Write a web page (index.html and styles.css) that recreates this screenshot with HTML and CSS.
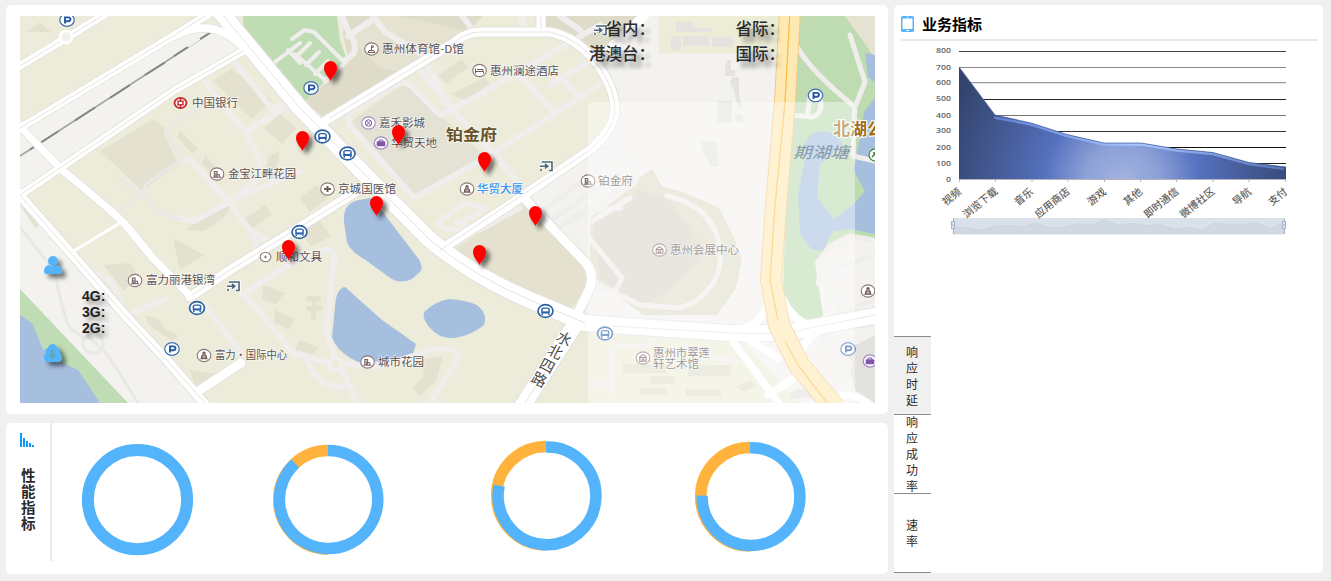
FILE: index.html
```html
<!DOCTYPE html>
<html lang="zh">
<head>
<meta charset="utf-8">
<title>业务指标</title>
<link rel="stylesheet" href="styles.css">
</head>
<body>
<main class="dashboard">
  <div class="left-column">
    <section class="card map-card">
      <div class="map">
        <svg class="map-canvas" viewBox="20 16 855 387" width="855" height="387">
          <defs>
            <symbol id="parking" viewBox="-8 -8 16 16" overflow="visible"><ellipse rx="7.2" ry="6.4" fill="#fff" stroke="#3f6fae" stroke-width="1.2"/><path d="M-2 3.6V-2.6H1.3a1.9 1.7 0 0 1 0 3.9H-2" fill="none" stroke="#2457a5" stroke-width="1.9"/></symbol>
            <symbol id="bus" viewBox="-9 -9 18 18" overflow="visible"><ellipse rx="8.3" ry="7.2" fill="#2c61a7"/><ellipse rx="6.6" ry="5.6" fill="#fff"/><path d="M-4.3 2.6V-1.8Q-4.3-3.5-2-3.5H2Q4.3-3.5 4.3-1.8V2.6Z" fill="#2c61a7"/><path d="M-2.8-2.2H2.8V.4H-2.8Z" fill="#fff"/><path d="M-3.2 2.5v1.6M3.2 2.5v1.6" stroke="#2c61a7" stroke-width="1.5"/></symbol>
            <symbol id="estate" viewBox="-8 -8 16 16" overflow="visible"><ellipse rx="6.8" ry="6.1" fill="#fff" stroke="#8b7877" stroke-width="1.1"/><path d="M-4 3.3H4M-2.7 3V-2.4H.1V3M2.4 3V.7H.1M-1.2-.8V3" fill="none" stroke="#7b6664" stroke-width="1.1"/></symbol>
            <symbol id="tower" viewBox="-8 -8 16 16" overflow="visible"><ellipse rx="6.8" ry="6.1" fill="#fff" stroke="#8b7877" stroke-width="1.1"/><path d="M-4.3 3.7H4.3L3 2.5V.3L1.6-.4V-3L0-4.2-1.6-3V-.4L-3 .3V2.5Z" fill="#755b58"/><path d="M-2 1.3H2M0-2V3" stroke="#fff" stroke-width=".5"/></symbol>
            <symbol id="museum" viewBox="-8 -8 16 16" overflow="visible"><ellipse rx="6.8" ry="6.1" fill="#fff" stroke="#8b7877" stroke-width="1.1"/><path d="M-3.3-1 0-3.4 3.3-1V3.2H-3.3ZM-3-.5H3M-1 3V1H1V3" fill="none" stroke="#755b58" stroke-width="1.1"/></symbol>
            <symbol id="bag" viewBox="-8 -8 16 16" overflow="visible"><ellipse rx="6.8" ry="6.1" fill="#fff" stroke="#a68cc5" stroke-width="1.3"/><rect x="-4.3" y="-1.7" width="8.6" height="5" rx="1" fill="#8056ad"/><path d="M-1.8-1.5V-3H1.8V-1.5" fill="none" stroke="#8056ad"/></symbol>
            <symbol id="exit" viewBox="-7 -6 14 12" overflow="visible"><path d="M-4-4H6V4.5H3M-6 .2H1M-1-2 1.8.2-1 2.5M-5 3v2" fill="none" stroke="#fff" stroke-width="3.5"/><path d="M-4-4H6V4.5H3M-6 .2H1M-1-2 1.8.2-1 2.5M-5 3v2" fill="none" stroke="#4a6478" stroke-width="1.6"/></symbol>
            <filter id="pin-shadow" x="-80%" y="-50%" width="300%" height="220%"><feDropShadow dx="4" dy="4" stdDeviation="2" flood-color="#222" flood-opacity=".6"/></filter>
            <symbol id="pin" viewBox="0 0 13 20" overflow="visible"><path d="M6.500 20C5 16 0 13 0 6.500a6.500 6.500 0 0 1 13 0C13 13 8 16 6.500 20Z" fill="red" filter="url(#pin-shadow)"/></symbol>
          </defs>

          <rect x="20" y="16" width="855" height="387" fill="#edecda"/>
          <!-- open ground -->
          <path d="M20 130 190 27 218 25 245 48 175 90 20 196Z" fill="#f3f2ef"/>
          <path d="M20 196 75 258 205 403H20Z" fill="#f3f2ef"/>
          <path d="M640 16H790L772 330H590L580 310 592 285 585 262 530 196 605 138 616 105 597 62Z" fill="#f3f2ef"/>
          <path d="M659 16H780L778 53H659Z" fill="#edecd7"/>
          <path d="M775 280 875 230V403H800L745 345 778 335Z" fill="#f3f2ef"/>
          <path d="M845 350 875 335V403L855 390Z" fill="#e3e2de"/>
          <!-- built-up blocks -->
          <path d="M100 151 153 119 164 127 165 135 178 164 142 191Z M213 81 232 69 272 100 252 119Z" fill="#e4e1d0"/>
          <path d="M345 16H482L470 31 400 72 325 118 304 102 349 62 343 35Z" fill="#dedbc9"/>
          <path d="M346 35 375 16H400L470 32 400 72 380 68Z" fill="#e5e2d1"/>
          <path d="M545 16H640L610 45 598 60 572 37 545 30Z" fill="#dedbc9"/>
          <path d="M350 122 405 83 438 113 486 158 418 199Z" fill="#e4e2d4"/>
          <path d="M450 252 525 204 560 240 585 268 588 285 572 307 540 304 500 286Z" fill="#e4e1ce"/>
          <path d="M590 213 652 169 662 186 686 193 719 208 733 235 742 260 736 288 717 315H643L590 275Z" fill="#dfdcc8"/>
          <path d="M592 220 640 190 668 198 705 250 675 285 640 308 600 278Z" fill="#d8d4c8"/>
          <g fill="#e4e1d0">
            <path d="M26 32 40 22 51 32ZM104 265 130 263 138 275 124 291ZM173 238 204 255 180 270ZM145 315 158 319 165 329 178 336 173 341 160 333 149 325ZM190 370 218 374 220 378 195 386Z"/>
            <path d="M264 128 280 114 297 128 282 144ZM180 130 198 149 192 154 177 137ZM205 155 225 177 218 182 202 164ZM268 156 280 151 274 179 266 174ZM185 230 205 214 234 204 223 218 204 231ZM242 220 265 205 272 214 249 231ZM300 198 316 185 328 198 310 212ZM300 230 319 220 331 236 311 247ZM438 75 462 59 468 67 446 84ZM451 94 485 77 490 85 464 100Z"/>
            <path d="M20 205 43 218 36 229ZM263 285 285 293 276 304 262 300ZM275 310 294 319 289 330 274 322ZM307 296h14v5h-5v5h6v5h-6v9h-5v-9h-5v-5h6v-5h-5ZM300 340l19 8-10 9-14-8ZM425 359l18-3-7 25-17 16-6-10 10-10Z"/>
          </g>
          <g fill="#e4e3df">
            <path d="M676 22h17v6h18v4h-35ZM683 36h26v10h-26ZM712 37h21v10h-21ZM671 36h10v14h-10Z"/>
            <path d="M727 60h4v10h4v6h-10v-10ZM732 77h7v18l4 13h-5l-4-17-4-8ZM717 101h15v22h-15ZM735 115h8v7h-8ZM700 140l17 2 2 24-7 1-8-13Z"/>
          </g>
          <g fill="#e1dfce"><path d="M623 364h43v9h-43ZM650 376h25v8h-25ZM688 365h43v11h-43ZM640 388h27v7h-27ZM686 389h35v7h-35ZM735 386l16-6 5 5-13 7Z"/></g>
          <!-- parks -->
          <path d="M243 16H337L340 40 347 60 300 106 244 49Z" fill="#c0dcb5"/>
          <path d="M798 16H875V238L850 233 828 244 815 262 823 315 815 323 795 317 783 295 786 200Z" fill="#bedbb2"/>
          <path d="M845 16H875V58Z" fill="#e5e2d1"/>
          <path d="M20 289 128 403H85L20 330Z" fill="#c0dcb5"/>
          <!-- water -->
          <g fill="#a6bfdf">
            <path d="M20 315 32 323 43 349 57 360 78 370 100 403H20Z"/>
            <path d="M359 200C347 202 343 211 344 223L347 242Q350 251 364 259L389 277Q399 285 412 279L421 271Q423 264 417 257L382 211 370 198Z"/>
            <path d="M345 287Q336 288 335 307L332 337Q335 348 350 358L360 363 394 360 413 354 416 344 402 334 382 320Z"/>
            <path d="M450 299Q437 300 424 312 422 319 430 328 439 339 455 338 472 335 484 325 488 314 477 305 465 300 450 299Z"/>
            <path d="M865 53 875 55V83L868 77ZM875 98 864 112 856 160 853 170 865 191 853 205 834 219 817 197 820 164 843 146Q837 129 817 132 802 137 806 153L798 195 800 234 811 249 823 251 833 231 850 229 875 234Z"/>
          </g>
          <g fill="none" stroke="#efeeed" stroke-linejoin="round" stroke-linecap="round">
            <g stroke-width="6">
              <path d="M235 62 273 110 280 105M205 82 245 132 260 160 258 178 229 202 300 171M245 132 287 106M183 159 190 160 229 202 250 230 268 241M250 230 258 248M177 218 195 221 229 202M245 295 295 355 300 354M205 305 245 360 192 394M242 295 300 257 325 250Q336 248 334 260L326 333 336 360Q365 370 390 364L430 350Q462 345 457 361L430 403M300 354 325 362 342 370 357 403M307 360Q320 389 343 387M90 275Q105 272 115 288L126 316 165 299"/>
              <path d="M345 60Q362 52 350 35L342 16M348 36 375 18M373 16 385 32 422 55 452 110 495 155 520 185M420 70 452 110 600 25M452 110 440 115 410 85Q402 80 389 88L350 112Q345 122 354 130L414 198 495 152 600 84M520 76 555 113M560 77 580 98M550 85 600 55M462 16 477 35M522 16V32M560 16 580 30"/>
            </g>
            <path stroke-width="4" d="M275 62 300 43M288 50 300 63M292 39 305 30 314 32 345 63 325 80 295 54M310 43 297 56M319 52 306 65M328 61 315 74M337 70 325 82"/>
            <g stroke-width="3"><path d="M165 133 175 121 215 100M165 133 183 158 145 185 142 194 158 211 178 219M142 194 115 214M20 227 55 272Q60 302 68 325 79 338 90 338L108 355 138 403M120 178 142 197" stroke="#e9e8e7"/><circle cx="93" cy="343" r="10" stroke="#e9e8e7"/></g>
            <g stroke-width="5">
              <path d="M437 223 465 203 484 208 475 216 456 222 480 230 520 208M437 223 446 229 482 229M558 227 588 208M590 152 612 145 636 172Q640 182 627 188L590 215M544 210 610 160M553 219 620 173M567 224 625 184M590 239 622 278 615 292 590 286M590 211 621 208M667 196Q705 204 717 235 725 260 715 280 700 304 678 308L640 305 590 280M612 393V352Q612 345 620 346L648 345 655 333M590 384H612M683 345 694 355 737 361M796 45Q811 72 855 107L853 156 875 161M850 35 865 82 855 107M792 115 812 117Q824 114 820 98M807 116 810 98M818 284 822 260 839 242 860 238 875 241M825 281 838 268 875 255M835 297 842 313 875 299M850 322 875 310M804 323 850 362 848 376 830 389M591 222 630 198"/>
            </g>
          </g>
          <!-- railway -->
          <path d="M20 156 213 31" stroke="#a5a5a3" stroke-width="1.8"/><path d="M30 149.500 58 131.500M75 120.500 95 107.500M110 98 130 85M145 75 165 62.500M174 56 188 47M200 39 213 31" stroke="#858583" stroke-width="2"/><path d="M188 47 200 39" stroke="#fff" stroke-width="1.500"/>
          <!-- main roads: casing then surface -->
          <g fill="none" stroke-linejoin="round" stroke-linecap="round">
            <g stroke="#e2e1dd">
              <path stroke-width="9" d="M10 72 66 38 112 10M10 134 175 35 215 10M10 202 175 90 245 50M10 116 60 168 110 210 124 223 152 257 190 296M175 36Q215 15 245 50M795 395Q810 388 835 405"/>
              <path stroke-width="11" d="M10 184 75 258 125 315 165 358 210 410M190 297 230 270 300 227 370 183M440 250 505 208 590 150Q613 130 615 112 616 92 600 68 580 38 550 32H480Q467 32 455 42L325 121M541 10V32M526 200 560 236 586 263Q595 275 589 290L572 325M197 392 241 363"/>
              <path stroke-width="18" d="M214 4 300 108 375 185 430 240Q475 277 530 300L585 323 640 327 730 333Q785 335 810 328L880 315M574 326 520 410"/>
            </g>
            <g stroke="#fff">
              <path stroke-width="3" d="M72 252 120 223"/>
              <path stroke-width="7.500" d="M10 72 66 38 112 10M10 134 175 35 215 10M10 202 175 90 245 50M10 116 60 168 110 210 124 223 152 257 190 296M175 36Q215 15 245 50M729 336 780 405M745 337 778 358M742 329Q760 325 770 302M783 299Q792 320 815 328M768 395 795 378M800 358Q803 340 819 331M837 398Q850 390 870 405"/>
              <path stroke-width="9" d="M10 184 75 258 125 315 165 358 210 410M190 297 230 270 300 227 370 183M440 250 505 208 590 150Q613 130 615 112 616 92 600 68 580 38 550 32H480Q467 32 455 42L325 121M541 10V32M526 200 560 236 586 263Q595 275 589 290L572 325M197 392 241 363M600 58 650 10"/>
              <path stroke-width="16" d="M214 4 300 108 375 185 430 240Q475 277 530 300L585 323 640 327 730 333Q785 335 810 328L880 315M574 326 520 410"/>
            </g>
            <g stroke="#e5e4e1" stroke-width="1"><path d="M20 66 66 38 102 16M20 128 175 35 205 16M20 195 175 90 243 51M20 195 75 258 125 315 165 358 205 403M222 14 300 108 375 185 430 240Q475 277 530 300L585 323M612 326 730 333Q785 335 810 328L875 315M570 332 525 403M192 295 230 270 300 227 365 187M330 118 455 42Q467 32 480 32H550Q580 38 600 68 616 92 615 112 613 130 590 150L440 250M541 16V30"/></g>
            <circle cx="66" cy="37" r="6" fill="#f1f0ec" stroke="#fff" stroke-width="2.5"/>
            <circle cx="335" cy="364" r="6" fill="#edecda" stroke="#f0efee" stroke-width="4"/>
          </g>
          <!-- expressway -->
          <g fill="none"><path d="M790 10 785 102 776 205 771 280 779 325 799 365 835 408" stroke="#efc98b" stroke-width="22"/><path d="M790 10 785 102 776 205 771 280 779 325 799 365 835 408" stroke="#ffe9b3" stroke-width="20"/><path d="M790 10 785 102 775 205 770 280 778 321M785 341 798 365 827 403" stroke="#fbbd43" stroke-width="1.3"/></g>

          <!-- map symbols -->
          <use href="#parking" x="59" y="12" width="16" height="16"/><use href="#parking" x="303" y="80" width="16" height="16"/><use href="#parking" x="164" y="341" width="16" height="16"/><use href="#parking" x="807.500" y="87.500" width="16" height="16"/><use href="#parking" x="840" y="341" width="16" height="16"/>
          <use href="#bus" x="313.500" y="127.500" width="18" height="18"/><use href="#bus" x="338.500" y="144.500" width="18" height="18"/><use href="#bus" x="290.500" y="223" width="18" height="18"/><use href="#bus" x="188" y="299" width="18" height="18"/><use href="#bus" x="536.500" y="302" width="18" height="18"/><use href="#bus" x="596" y="324.500" width="18" height="18"/>
          <use href="#estate" x="209" y="166" width="16" height="16"/><use href="#estate" x="127" y="272.500" width="16" height="16"/><use href="#estate" x="359.500" y="354" width="16" height="16"/><use href="#estate" x="580" y="173" width="16" height="16"/>
          <use href="#tower" x="459" y="181" width="16" height="16"/><use href="#tower" x="196" y="347.500" width="16" height="16"/><use href="#tower" x="860" y="283" width="16" height="16"/>
          <use href="#museum" x="651.500" y="242" width="16" height="16"/><use href="#museum" x="635" y="350" width="16" height="16"/>
          <use href="#bag" x="373" y="135" width="16" height="16"/><use href="#bag" x="862" y="353" width="16" height="16"/>
          <use href="#exit" x="539" y="160" width="14" height="12"/><use href="#exit" x="226" y="280" width="14" height="12"/><use href="#exit" x="593" y="24" width="14" height="12"/>
          <g fill="none" stroke="#c5262b"><ellipse cx="180.500" cy="103" rx="6" ry="5.200" stroke-width="1.8" fill="#fff"/><rect x="178" y="101.200" width="5" height="3.600" stroke-width="1.4"/><path d="M180.500 98v3M180.500 105v3" stroke-width="1.5"/></g>
          <g fill="#fff" stroke="#8b7877" stroke-width="1.1"><ellipse cx="371.500" cy="49" rx="6.800" ry="6.100"/><ellipse cx="479.500" cy="70.500" rx="6.800" ry="6.100"/><ellipse cx="327.500" cy="189" rx="6.800" ry="6.100"/><ellipse cx="265.500" cy="257" rx="5.300" ry="4.800"/><ellipse cx="368.500" cy="123" rx="6.800" ry="6.100" stroke="#a68cc5"/><ellipse cx="876" cy="155" rx="7" ry="6.200" stroke="#397c35"/></g>
          <g fill="none" stroke="#755b58" stroke-width="1"><path d="M368 52.500h7l-1-2h-5zM371.500 50v-4.500l2.500 1-2.500 1.500M475.500 73.500v-5M475.500 71.500h8v2M477 69.500h6v2"/><path d="M324 189h7M327.500 186v6" stroke-width="2"/><circle cx="265.500" cy="257" r=".8"/><circle cx="368.500" cy="123" r="3.200" stroke="#8056ad"/><path d="M366.500 121l4 4m0-4l-4 4" stroke="#8056ad"/><path d="M872 157l4-4 3 4M873 153h4" stroke="#397c35" stroke-width="1.500"/></g>

          <!-- place names -->
          <g class="place">
            <text x="382" y="53" textLength="82" lengthAdjust="spacingAndGlyphs">惠州体育馆-D馆</text>
            <text x="490" y="74.500" textLength="69" lengthAdjust="spacingAndGlyphs">惠州澜途酒店</text>
            <text x="192" y="107" textLength="46" lengthAdjust="spacingAndGlyphs">中国银行</text>
            <text x="379" y="127" textLength="46" lengthAdjust="spacingAndGlyphs">嘉禾影城</text>
            <text x="391" y="147" textLength="46" lengthAdjust="spacingAndGlyphs">华贸天地</text>
            <text x="228" y="178" textLength="68" lengthAdjust="spacingAndGlyphs">金宝江畔花园</text>
            <text x="338" y="193" textLength="58" lengthAdjust="spacingAndGlyphs">京城国医馆</text>
            <text class="place-active" x="477" y="193" textLength="46" lengthAdjust="spacingAndGlyphs">华贸大厦</text>
            <text x="598" y="185" textLength="35" lengthAdjust="spacingAndGlyphs">铂金府</text>
            <text x="276" y="261" textLength="46" lengthAdjust="spacingAndGlyphs">顺和文具</text>
            <text x="146" y="284" textLength="69" lengthAdjust="spacingAndGlyphs">富力丽港银湾</text>
            <text x="215" y="359" textLength="72" lengthAdjust="spacingAndGlyphs">富力·国际中心</text>
            <text x="378" y="366" textLength="46" lengthAdjust="spacingAndGlyphs">城市花园</text>
            <text x="670" y="254" textLength="69" lengthAdjust="spacingAndGlyphs">惠州会展中心</text>
            <text x="653" y="356.500" textLength="57" lengthAdjust="spacingAndGlyphs">惠州市翠莲</text>
            <text x="653" y="367.500" textLength="46" lengthAdjust="spacingAndGlyphs">轩艺术馆</text>
          </g>
          <text class="district" x="446" y="140" textLength="51" lengthAdjust="spacingAndGlyphs">铂金府</text>
          <text class="park-name" x="833" y="135">北湖公</text>
          <g class="street"><text transform="translate(564 339) rotate(28)" y="5">水</text><text transform="translate(555 352) rotate(28)" y="5">北</text><text transform="translate(547 366) rotate(28)" y="5">四</text><text transform="translate(539 380) rotate(28)" y="5">路</text></g>
          <rect x="588" y="102" width="267" height="310" rx="6" fill="#fff" fill-opacity=".42"/>
          <text class="lake-name" x="793" y="158" textLength="56" lengthAdjust="spacingAndGlyphs">期湖塘</text>

          <!-- stations -->
          <use href="#pin" x="324" y="61" width="13" height="20"/><use href="#pin" x="296" y="131" width="13" height="20"/><use href="#pin" x="392" y="125" width="13" height="20"/><use href="#pin" x="478" y="152" width="13" height="20"/><use href="#pin" x="370" y="196" width="13" height="20"/><use href="#pin" x="529" y="206" width="13" height="20"/><use href="#pin" x="473" y="245" width="13" height="20"/><use href="#pin" x="282" y="240" width="13" height="20"/>
        </svg>

        <dl class="traffic"><dt>省内：</dt><dt>省际：</dt><dt>港澳台：</dt><dt>国际：</dt></dl>
        <svg class="map-icon user-icon" viewBox="0 0 18 18"><circle cx="9" cy="5" r="5"/><path d="M0 15q0-5 5-6 4 3 8 0 5 1 5 6 0 3-2 3H2q-2 0-2-3z"/></svg>
        <ul class="networks"><li>4G:</li><li>3G:</li><li>2G:</li></ul>
        <svg class="map-icon cloud-icon" viewBox="0 0 18 18"><path d="M3 18Q0 17 0 13 0 10 2 9 0 5 4 4 5 0 9 0q3 0 4 4 4 0 3 5 2 1 2 5 0 4-4 4z"/><path class="arrow" d="M7.500 5h2v5.500h3L8.500 15l-4-4.500h3z"/></svg>
      </div>
    </section>

    <section class="card performance">
      <header class="performance-title">
        <svg width="14" height="14" viewBox="0 0 14 14" fill="#0a9bff"><path d="M0 0h2v14H0zM3 5h2v9H3zM6 8h2v6H6zM9 10h2v4H9zM12 12h2v2h-2z"/></svg>
        <h2>性能指标</h2>
      </header>
      <svg class="donuts" viewBox="52 423 836 151" width="836" height="151">
        <g fill="none" stroke-width="11.500">
          <circle cx="137.500" cy="499.700" r="49.600" stroke="#54b4fb" stroke-width="12"/>
          <path d="M328 549.100A49.300 49.300 0 0 1 328 450.500" stroke="#ffb33c"/><path d="M328 450.600A49.200 49 0 1 1 295.300 463.500" stroke="#54b4fb"/>
          <path d="M546 545A49.300 49.300 0 0 1 546 446.400" stroke="#ffb33c"/><path d="M546 446.900A48.900 48.900 0 1 1 499.200 485.600" stroke="#54b4fb"/>
          <path d="M750 546A49.300 49.300 0 0 1 750 447.400" stroke="#ffb33c"/><path d="M750 447.700A48.900 48.900 0 1 1 702.100 495.600" stroke="#54b4fb"/>
        </g>
      </svg>
    </section>
  </div>

  <section class="card business">
    <header class="business-title">
      <svg width="13" height="16" viewBox="0 0 13 16"><rect width="13" height="16" rx="1.700" fill="#54b4fb"/><rect x="1.500" y="2.500" width="10" height="10.500" rx=".5" fill="#fff"/><path d="M5 14.500h3M6 1.200h1" stroke="#fff"/></svg>
      <h1>业务指标</h1>
    </header>
    <svg class="chart" viewBox="894 41 429 200" width="429" height="200">
      <defs>
        <radialGradient id="area" gradientUnits="userSpaceOnUse" cx="1122" cy="182" r="186"><stop offset="0" stop-color="#a3b4e0"/><stop offset=".2" stop-color="#8da0d7"/><stop offset=".42" stop-color="#5571bf"/><stop offset=".68" stop-color="#455b96"/><stop offset="1" stop-color="#33436c"/></radialGradient>
        <linearGradient id="edge"><stop stop-color="#5e7ed0"/><stop offset=".5" stop-color="#a9c6ff"/><stop offset="1" stop-color="#5672b8"/></linearGradient>
      </defs>
      <g stroke-width="1"><path d="M959 51.500h327" stroke="#444"/><path d="M959 67.500h327" stroke="#888"/><path d="M959 82.700h327" stroke="#999" stroke-width="1.300"/><path d="M959 99.500h327" stroke="#222"/><path d="M959 115.500h327" stroke="#777"/><path d="M959 131.500h327" stroke="#333"/><path d="M959 147.500h327" stroke="#111"/><path d="M959 163.500h327" stroke="#222"/></g>
      <path d="M959 67 995 115 1031 123 1067 134.500 1104 143H1141L1177 149 1213 152.500 1249 162.500 1286 167V179.500H959Z" fill="url(#area)"/>
      <path d="M994 117.500 1031 124.500 1067 136 1104 144.500H1141L1177 150.500 1213 154 1249 164 1284 169" fill="none" stroke="url(#edge)" stroke-width="2.600"/>
      <path d="M959 67 995 115 1031 123 1067 134.500 1104 143H1141L1177 149 1213 152.500 1249 162.500 1286 167" fill="none" stroke="#435d9c" stroke-width=".7"/>
      <path d="M959 179.500h327M959.500 180v2M995.500 180v2M1032 180v2M1068 180v2M1104.500 180v2M1140.500 180v2M1176.500 180v2M1213 180v2M1249 180v2M1285.500 180v2" stroke="#b3b3bd"/>
      <rect x="953" y="218" width="332" height="16" fill="#dae1eb"/>
      <path d="M953 227.500H968L981 230.500 995 226 1008 225.500 1022 227 1036 223 1048 227.500H1060L1078 223.500 1090 225.500 1104 220 1119 225 1133 223.500 1147 225.500 1160 224 1174 229 1188 227.500 1201 230 1215 223 1230 225H1242L1256 222.500 1270 229 1284 222V234H953Z" fill="#d0d8e1" stroke="#c4cdd7" stroke-width=".5"/>
      <g fill="#dce6f2" stroke="#a5b7cf"><path d="M953.500 218v16M1284.500 218v16"/><rect x="951.500" y="221.500" width="3" height="7"/><rect x="1282.500" y="221.500" width="3" height="7"/><path d="M952 225h2M1283 225h2"/></g>
      <g class="y-axis"><text x="936" y="53.200" textLength="15" lengthAdjust="spacingAndGlyphs">800</text><text x="936" y="69.500" textLength="15" lengthAdjust="spacingAndGlyphs">700</text><text x="936" y="85.300" textLength="15" lengthAdjust="spacingAndGlyphs">600</text><text x="936" y="101.300" textLength="15" lengthAdjust="spacingAndGlyphs">500</text><text x="936" y="117.600" textLength="15" lengthAdjust="spacingAndGlyphs">400</text><text x="936" y="133.400" textLength="15" lengthAdjust="spacingAndGlyphs">300</text><text x="936" y="149.800" textLength="15" lengthAdjust="spacingAndGlyphs">200</text><text x="936" y="165.800" textLength="15" lengthAdjust="spacingAndGlyphs">100</text><text x="946" y="181.800" textLength="5" lengthAdjust="spacingAndGlyphs">0</text></g>
      <g class="x-axis"><text transform="translate(962 193) rotate(-39)">视频</text><text transform="translate(998.500 192.500) rotate(-39)">浏览下载</text><text transform="translate(1034 193) rotate(-39)">音乐</text><text transform="translate(1070.500 192.500) rotate(-39)">应用商店</text><text transform="translate(1107 193) rotate(-39)">游戏</text><text transform="translate(1143 193) rotate(-39)">其他</text><text transform="translate(1179.500 192.500) rotate(-39)">即时通信</text><text transform="translate(1215.500 192.500) rotate(-39)">微博社区</text><text transform="translate(1252 193) rotate(-39)">导航</text><text transform="translate(1288 193) rotate(-39)">支付</text></g>
    </svg>
    <nav class="tabs"><a class="tab selected">响应时延</a><a class="tab">响应成功率</a><a class="tab">速率</a></nav>
  </section>
</main>
</body>
</html>
```
FILE: styles.css
```css
* { box-sizing: border-box; }
body { margin: 0; background: #f0f0f0; color: #2b2b2b; font-family: "Liberation Sans", "Noto Sans CJK SC", sans-serif; }
h1, h2, dl, dt, ul { margin: 0; padding: 0; }
ul { list-style: none; }
svg { display: block; flex: none; }
.dashboard { display: flex; align-items: flex-start; gap: 6px; height: 581px; padding: 5px 8px 7px 6px; overflow: hidden; }
.left-column { display: flex; flex-direction: column; gap: 9px; width: 882px; }
.card { background: #fff; border-radius: 5px; }
.map-card { height: 409px; padding: 11px 13px 11px 14px; }
.map { position: relative; width: 855px; height: 387px; overflow: hidden; }
.place { font: 10.800px "Noto Sans CJK SC", sans-serif; fill: #5b5050; paint-order: stroke; stroke: rgba(255,255,255,.65); stroke-width: 1.5px; }
.place-active { fill: #3796f5; font-weight: 500; }
.district { font: bold 15px "Noto Sans CJK SC", sans-serif; fill: #65532c; paint-order: stroke; stroke: #f6f3e7; stroke-width: 2px; }
.park-name { font: bold 17px "Noto Sans CJK SC", sans-serif; fill: #a26d16; paint-order: stroke; stroke: #fff; stroke-width: 2px; }
.lake-name { font: italic 15.500px "Noto Sans CJK SC", sans-serif; fill: #8499ac; }
.street { font: 15px "Noto Sans CJK SC", sans-serif; fill: #514b47; text-anchor: middle; paint-order: stroke; stroke: #fff; stroke-width: 2px; }
.traffic { position: absolute; top: 0; left: 569px; display: grid; grid-template-columns: 66px 130px; grid-auto-rows: 25px; font: 500 16.500px/25px "Noto Sans CJK SC", sans-serif; text-align: right; text-shadow: 5px 6px 4px rgba(0,0,0,.4); }
.traffic dt { white-space: nowrap; }
.map-icon { position: absolute; left: 24px; width: 18px; height: 18px; fill: #54b4fb; filter: drop-shadow(4px 4px 2px rgba(0,0,0,.5)); }
.user-icon { top: 240px; }
.cloud-icon { top: 328px; }
.arrow { fill: #65a4aa; }
.networks { position: absolute; left: 62px; top: 272px; font: bold 14px/16px "Liberation Sans", sans-serif; text-shadow: 4px 4px 4px rgba(0,0,0,.4); color: #1e1e1e; }
.performance { display: flex; height: 151px; }
.performance-title { display: flex; flex-direction: column; align-items: flex-start; gap: 20px; width: 46px; height: 138px; padding: 10px 0 0 14px; border-right: 2px solid #e5eaf0; }
.performance-title h2 { width: 16px; margin-left: 1px; font: bold 14.500px/16px "Noto Sans CJK SC", sans-serif; word-break: break-all; }
.business { display: flex; flex-direction: column; width: 429px; height: 568px; }
.business-title { display: flex; align-items: center; gap: 8px; height: 36px; margin: 0 5px 0 7px; padding-top: 4px; border-bottom: 2px solid #e4eaf1; }
.business-title h1 { color: #000; font: bold 15px/20px "Noto Sans CJK SC", sans-serif; }
.y-axis { font: 600 7.500px "Open Sans", sans-serif; fill: #666; }
.x-axis { font: 500 10.300px "Noto Sans CJK SC", sans-serif; fill: #636363; text-anchor: end; }
.tabs { display: flex; flex-direction: column; width: 37px; margin-top: auto; border-top: 1px solid #8c8c8c; }
.tab { display: flex; align-items: center; height: 79px; padding: 0 12px; border-bottom: 1px solid #8c8c8c; font: 12px/16px "Noto Sans CJK SC", sans-serif; word-break: break-all; }
.tab.selected { height: 78px; background: #f0f0f0; }
```
